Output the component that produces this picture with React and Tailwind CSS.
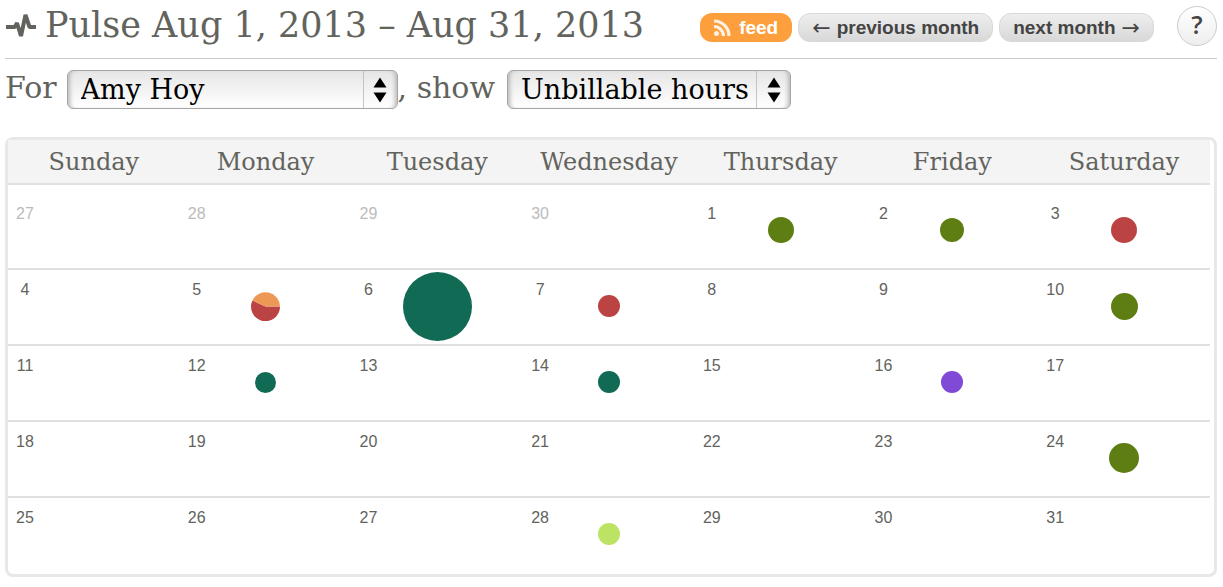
import React, { useState } from 'react';

const days = ['Sunday', 'Monday', 'Tuesday', 'Wednesday', 'Thursday', 'Friday', 'Saturday'];

const weeks = [
  [27, 28, 29, 30, 1, 2, 3],
  [4, 5, 6, 7, 8, 9, 10],
  [11, 12, 13, 14, 15, 16, 17],
  [18, 19, 20, 21, 22, 23, 24],
  [25, 26, 27, 28, 29, 30, 31]
];

// keyed by day of the month
const entries = {
  1: { size: 26, color: '#5e7d12' },
  2: { size: 24, color: '#5e7d12' },
  3: { size: 26, color: '#bb4343' },
  5: { size: 29, color: '#bb4343', second: '#ee9856' },
  6: { size: 69, color: '#116b54' },
  7: { size: 22, color: '#bb4343' },
  10: { size: 27, color: '#5e7d12' },
  12: { size: 21, color: '#116b54' },
  14: { size: 22, color: '#116b54' },
  16: { size: 22, color: '#8049d6' },
  24: { size: 30, color: '#5e7d12' },
  28: { size: 22, color: '#bde364' }
};

const Pie = ({ size, color, second }) => (
  <svg width={size} height={size} viewBox="-50 -50 100 100">
    {second ? (
      <>
        <path d="M0 0 L50 0 A50 50 0 1 1 -45 -21 Z" fill={color} />
        <path d="M0 0 L50 0 A50 50 0 0 0 -45 -21 Z" fill={second} />
      </>
    ) : (
      <circle r="50" fill={color} />
    )}
  </svg>
);

const Picker = ({ label, value, options, onChange, className }) => (
  <span className={`relative inline-flex ${className}`}>
    <select
      aria-label={label}
      value={value}
      onChange={e => onChange(e.target.value)}
      className="h-[39px] w-full appearance-none rounded-md border border-[#a5a5a5] bg-linear-to-b from-[#e6e6e6] to-white pl-[13px] pr-9 text-[27px] leading-8 text-black shadow-[inset_5px_0_4px_-3px_#b8b8b8,inset_-5px_0_4px_-3px_#b8b8b8]"
    >
      {options.map(option => (
        <option key={option}>{option}</option>
      ))}
    </select>
    <span className="pointer-events-none absolute inset-y-px right-px flex w-[34px] items-center justify-center border-l border-[#c4c4c4]">
      <svg width="14" height="26" viewBox="0 0 14 26">
        <path d="M7 0.5 L13.5 10.5 H0.5 Z M7 25.5 L13.5 15.5 H0.5 Z" fill="#000" />
      </svg>
    </span>
  </span>
);

const MonthButton = ({ children }) => (
  <button
    type="button"
    className="mt-[7px] ml-[6px] flex h-[29px] items-center gap-1.5 rounded-xl border border-[#d8d8d8] bg-linear-to-b from-[#eeeeee] to-[#d8d8d8] px-[13px]"
  >
    {children}
  </button>
);

const Arrow = ({ children }) => (
  <span className="font-['DejaVu_Sans',sans-serif] text-[22px] font-normal">{children}</span>
);

const App = () => {
  const [person, setPerson] = useState('Amy Hoy');
  const [kind, setKind] = useState('Unbillable hours');

  return (
    <div className="bg-white pl-[5px] pr-[6px] pb-2 font-['DejaVu_Serif',serif] text-[#62635d]">
      <header className="flex h-[59px] items-start justify-between border-b border-[#cccccc]">
        <h1 className="flex items-center text-[35px] leading-[50px] whitespace-nowrap">
          <svg className="mr-2 shrink-0" width="32" height="30" viewBox="0 0 32 30">
            <path d="M1 17 H10 L12 13 L16 26 L20.5 5 L24.5 17 H31" fill="none" stroke="currentColor" strokeWidth="4" strokeLinejoin="bevel" />
          </svg>
          Pulse Aug 1, 2013 – Aug 31, 2013
        </h1>

        <nav className="flex items-start pt-[6px] font-['Liberation_Sans',Arial,sans-serif] text-[19px] leading-[27px] font-bold whitespace-nowrap text-[#444444]">
          <a href="#feed" className="mt-[7px] flex h-[29px] items-center gap-2 rounded-xl bg-[#fd9f3c] px-[14px] text-white">
            <svg width="17" height="17" viewBox="0 0 17 17" opacity="0.85">
              <circle cx="2.5" cy="14.5" r="2.5" fill="#fff" />
              <path d="M0 7.5 A9.5 9.5 0 0 1 9.5 17 M0 2 A15 15 0 0 1 15 17" fill="none" stroke="#fff" strokeWidth="3.2" />
            </svg>
            feed
          </a>
          <MonthButton>
            <Arrow>←</Arrow>
            previous month
          </MonthButton>
          <MonthButton>
            next month
            <Arrow>→</Arrow>
          </MonthButton>
          <button type="button" aria-label="Help" className="ml-[23px] size-10 rounded-full border border-[#cccccc] bg-linear-to-b from-white to-[#eeeeee] pb-1 font-['Open_Sans',sans-serif] text-[25px] font-semibold">
            ?
          </button>
        </nav>
      </header>

      <div className="flex items-center pt-[11px] text-[30px] leading-[39px] whitespace-nowrap">
        <span className="pb-1 leading-[35px]">For</span>
        <Picker label="Person" className="ml-2.5 w-[331px]" value={person} onChange={setPerson} options={['Amy Hoy']} />
        <span className="pb-1 leading-[35px]">, show</span>
        <Picker
          label="Hours"
          className="ml-3 w-[284px]"
          value={kind}
          onChange={setKind}
          options={['Unbillable hours', 'Billable hours']}
        />
      </div>

      <div className="mt-7 rounded-lg border-3 border-[#e8e8e8] pr-1 pb-[2px]">
        <table className="w-full table-fixed border-collapse">
          <thead>
            <tr className="h-11 border-b-2 border-[#e0e0e0] bg-[#f4f4f4]">
              {days.map(day => (
                <th key={day} className="p-0 text-[24px] leading-8 font-normal">{day}</th>
              ))}
            </tr>
          </thead>
          <tbody className="font-['Liberation_Sans',Arial,sans-serif]">
            {weeks.map((week, w) => (
              <tr key={w} className="border-b-2 border-[#e0e0e0] last:border-b-0">
                {week.map(day => {
                  // the first row opens with the tail of the previous month
                  const outside = w === 0 && day > 7;
                  const entry = outside ? null : entries[day];
                  return (
                    <td key={day} className={w === 0 ? 'p-0 pt-[9px]' : 'p-0'}>
                      <div className="grid h-[74px] grid-cols-[34px_1fr_34px] items-center pb-[2px]">
                        <span className={`self-start pt-3 text-center text-[16px] leading-4 ${outside ? 'text-[#bbbbbb]' : ''}`}>
                          {day}
                        </span>
                        <span className="flex justify-center">{entry && <Pie {...entry} />}</span>
                      </div>
                    </td>
                  );
                })}
              </tr>
            ))}
          </tbody>
        </table>
      </div>
    </div>
  );
};

export default App;
